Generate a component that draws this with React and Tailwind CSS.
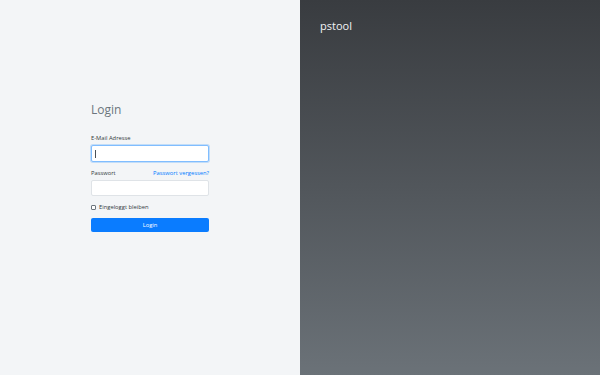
export default function App() {
  return (
    <div className="flex h-[375px] w-[600px] font-['Open_Sans',sans-serif]">
      {/* linke Seite: Login-Formular */}
      <div className="flex w-1/2 justify-center bg-[#f3f5f7] pt-[102px]">
        <div className="w-[118px]">
          <h1 className="text-[12px] leading-[16px] text-[#6c757d]">Login</h1>
          <form className="mt-[16px]">
            <label className="block text-[5.8px] leading-[9px] text-[#343a40]">E-Mail Adresse</label>
            <div className="mt-[2px] flex h-[17px] items-center rounded-[2px] border border-[#80bdff] bg-white pl-[3px] shadow-[0_0_0_1px_rgba(0,123,255,0.2)]">
              <span className="h-[8px] w-px bg-[#495057]" />
            </div>
            <div className="mt-[7px] flex h-[9px] items-center justify-between text-[5.8px] leading-[9px]">
              <label className="text-[#343a40]">Passwort</label>
              <a className="text-[#007bff]">Passwort vergessen?</a>
            </div>
            <div className="mt-[2px] h-[16px] rounded-[2px] border border-[#dfe3e7] bg-white" />
            <label className="mt-[7px] flex h-[9px] items-center gap-[3px] text-[5.8px] leading-[9px] text-[#343a40]">
              <span className="h-[5px] w-[5px] rounded-[1px] border border-[#6c757d] bg-white" />
              Eingeloggt bleiben
            </label>
            <button type="button" className="mt-[6px] block h-[14px] w-full rounded-[2px] bg-[#0a7cff] text-[5.8px] leading-[14px] text-white">
              Login
            </button>
          </form>
        </div>
      </div>
      {/* rechte Seite */}
      <div className="w-1/2 bg-gradient-to-b from-[#393c40] to-[#6b7278] px-[20px] pt-[18px]">
        <div className="text-[11px] leading-[15px] text-[#f1f3f5]">pstool</div>
      </div>
    </div>
  );
}
